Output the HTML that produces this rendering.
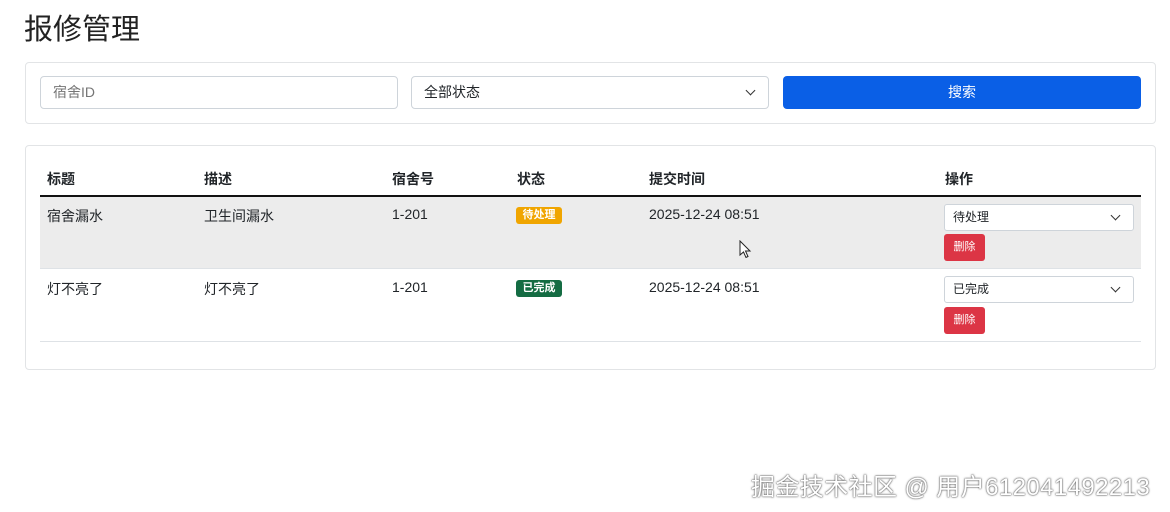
<!DOCTYPE html>
<html><head><meta charset="utf-8"><style>
*{box-sizing:border-box;margin:0;padding:0}
body{width:1170px;height:512px;background:#fff;font-family:"Liberation Sans","Noto Sans CJK SC",sans-serif;color:#212529;position:relative;overflow:hidden;font-size:14px}
.abs{position:absolute}
h1{position:absolute;left:24px;top:6px;font-size:29px;font-weight:400;color:#222}
.card{position:absolute;border:1px solid #e2e4e6;border-radius:4px}
.inp{position:absolute;border:1px solid #ced4da;border-radius:4px;height:33px;font-size:14px;line-height:31px;padding-left:12px}
.chev{position:absolute;width:7px;height:7px;border-right:1.6px solid #333;border-bottom:1.6px solid #333;transform:rotate(45deg)}
.th{position:absolute;top:169px;font-weight:700;font-size:14px}
.td{position:absolute;font-size:14px}
.badge{position:absolute;font-size:11px;font-weight:700;color:#fff;border-radius:3px;padding:1px 0;width:46px;text-align:center;line-height:15px}
.del{position:absolute;left:944px;width:41px;height:27px;background:#dc3545;color:#fff;border-radius:3px;font-size:11px;line-height:27px;text-align:center}
.sel{position:absolute;left:944px;width:190px;height:27px;border:1px solid #ced4da;border-radius:3px;background:#fff;font-size:12px;line-height:25px;padding-left:8px}
</style></head><body>
<h1>报修管理</h1>
<div class="card" style="left:25px;top:62px;width:1131px;height:62px"></div>
<div class="inp" style="left:40px;top:76px;width:358px;color:#757575">宿舍ID</div>
<div class="inp" style="left:411px;top:76px;width:358px;color:#212529">全部状态</div>
<div class="chev" style="left:747px;top:87px"></div>
<div class="abs" style="left:783px;top:76px;width:358px;height:33px;background:#0a5fe6;border-radius:4px;color:#fff;text-align:center;line-height:33px;font-size:14px">搜索</div>

<div class="card" style="left:25px;top:145px;width:1131px;height:225px"></div>
<div class="th" style="left:47px">标题</div>
<div class="th" style="left:204px">描述</div>
<div class="th" style="left:392px">宿舍号</div>
<div class="th" style="left:517px">状态</div>
<div class="th" style="left:649px">提交时间</div>
<div class="th" style="left:945px">操作</div>
<div class="abs" style="left:40px;top:195px;width:1101px;height:2px;background:#111"></div>
<div class="abs" style="left:40px;top:197px;width:1101px;height:72px;background:#ececec"></div>
<div class="abs" style="left:40px;top:268px;width:1101px;height:1px;background:#dee2e6"></div>
<div class="abs" style="left:40px;top:341px;width:1101px;height:1px;background:#dee2e6"></div>

<div class="td" style="left:47px;top:206px">宿舍漏水</div>
<div class="td" style="left:204px;top:206px">卫生间漏水</div>
<div class="td" style="left:392px;top:206px">1-201</div>
<div class="badge" style="left:516px;top:207px;background:#f0a500">待处理</div>
<div class="td" style="left:649px;top:206px">2025-12-24 08:51</div>
<div class="sel" style="top:204px">待处理</div>
<div class="chev" style="left:1112px;top:212px"></div>
<div class="del" style="top:234px">删除</div>

<div class="td" style="left:47px;top:279px">灯不亮了</div>
<div class="td" style="left:204px;top:279px">灯不亮了</div>
<div class="td" style="left:392px;top:279px">1-201</div>
<div class="badge" style="left:516px;top:280px;background:#146c43">已完成</div>
<div class="td" style="left:649px;top:279px">2025-12-24 08:51</div>
<div class="sel" style="top:276px">已完成</div>
<div class="chev" style="left:1112px;top:284px"></div>
<div class="del" style="top:307px">删除</div>

<svg class="abs" style="left:739px;top:240px" width="13" height="19" viewBox="0 0 13 19"><path d="M1 1 L1 15 L4.5 12 L7 17.5 L9 16.5 L6.5 11 L11 11 Z" fill="#fff" stroke="#222" stroke-width="1"/></svg>

<div class="abs" style="left:751px;top:467px;font-size:24px;letter-spacing:0.4px;color:#fff;text-shadow:0 0 2px #555,0 0 1px #333;white-space:nowrap">掘金技术社区 @ 用户612041492213</div>
</body></html>
